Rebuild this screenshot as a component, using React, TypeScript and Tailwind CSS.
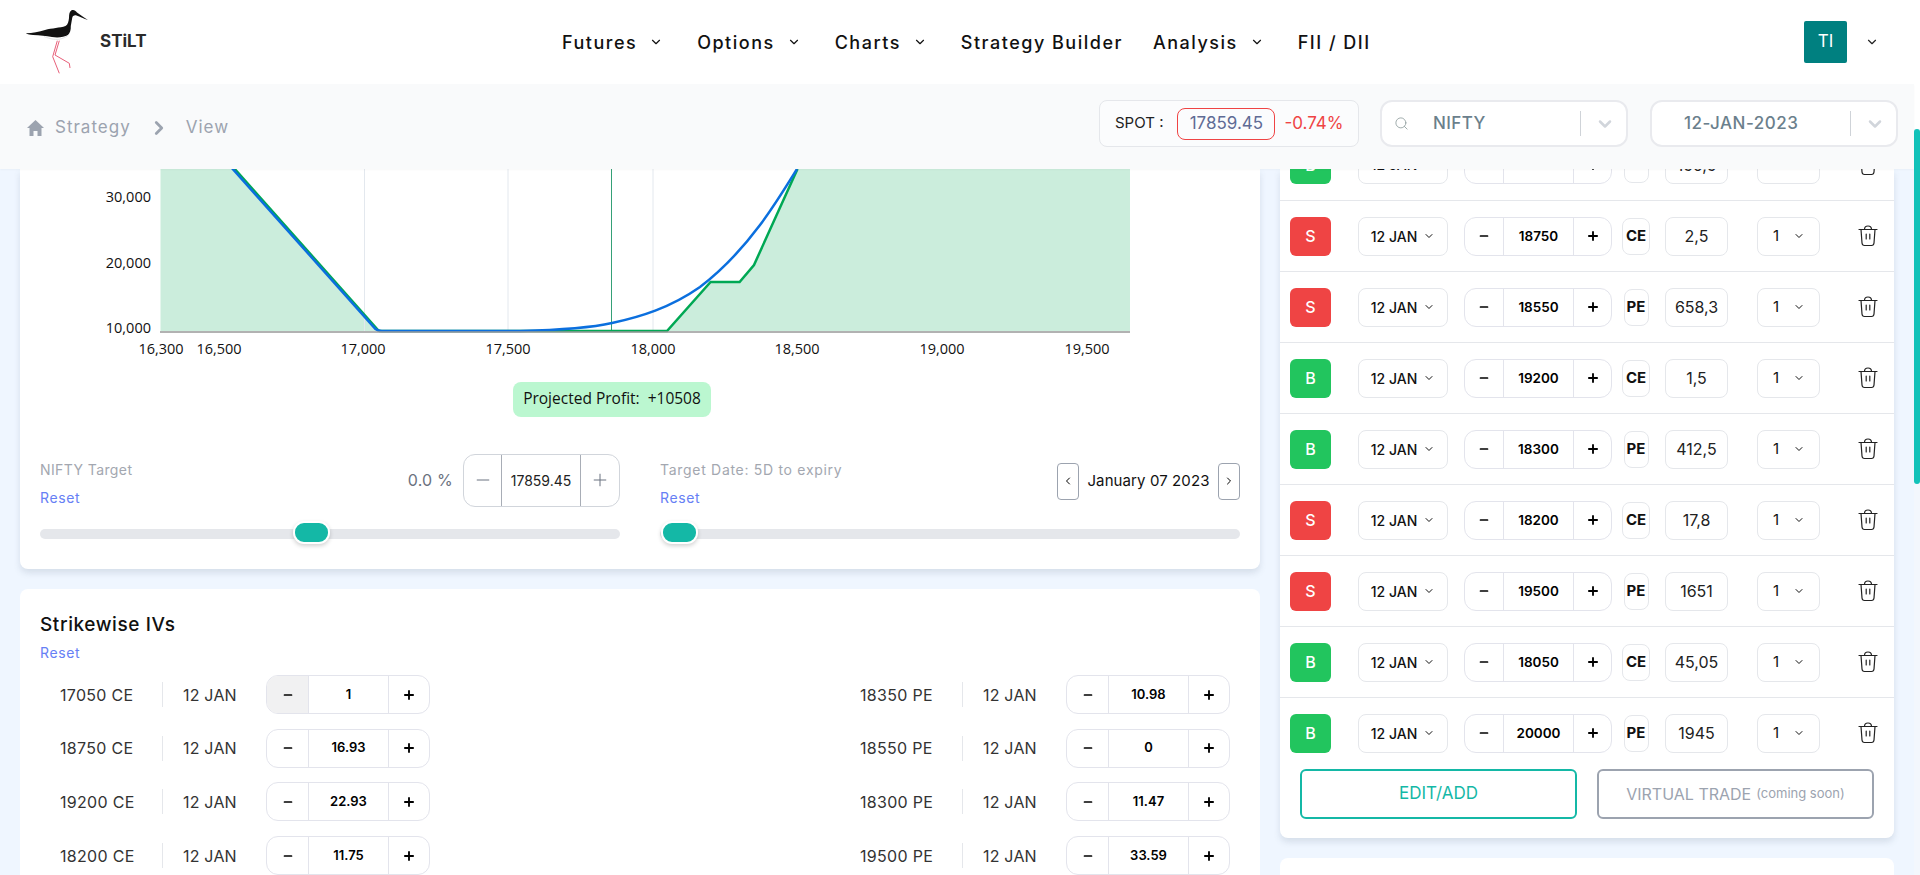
import React from "react";
import { ChevronDown, ChevronLeft, ChevronRight, Search, Minus, Plus } from "lucide-react";

const FONT = "[font-family:Inter,'Noto_Sans',sans-serif]";

function Bird() {
  return (
    <svg width="64" height="68" viewBox="25 8 64 68" className="shrink-0">
      <path d="M25.7 33.3 C33 33 39 32 45 30 C52 28 60 28 65.5 26 C68 24.8 68.6 21.5 69 18 C69 14 69.5 11.5 71.5 10.3 C73.5 9.4 75.5 10.3 77 12.4 C80 14.4 84.5 18 88 20 C84 18.6 80 16.6 76.5 15.4 C74 15 72.6 15.8 72.2 18 C71.8 20.5 71.2 23.5 70.8 26 C71 30 70 33 68 35 C64 37.2 58 38 52 37 C46 36 40 35.2 33 35 C30 35 28 34.5 25.7 33.3 Z" fill="#111" />
      <path d="M44 36.5 C50 39 57 40.5 62 38.5 C65 37.5 67 36.5 68.5 35" fill="none" stroke="#e2e4e7" strokeWidth="1" />
      <path d="M57.3 40.7 L52.7 56.7 L59.3 73.3 M59.3 40.7 L55 55 L69.3 63.3 L70 68" fill="none" stroke="#e8607a" strokeWidth="1" />
    </svg>
  );
}

function NavItem({ label, chevron = true }: { label: string; chevron?: boolean }) {
  return (
    <div className={`flex items-center text-[18px] font-medium tracking-[1.5px] text-[#111] ${chevron ? "pr-[4px]" : ""}`}>
      <span>{label}</span>
      {chevron && <ChevronDown size={14} strokeWidth={2} className="ml-[12px]" />}
    </div>
  );
}

function Header() {
  return (
    <header className="h-[84px] shrink-0 bg-white flex items-center relative">
      <div className="w-[562px] shrink-0 flex items-center pl-[25px]">
        <Bird />
        <span className="ml-[11px] text-[17px] font-bold text-[#2b2b2b]">STiLT</span>
      </div>
      <div className="flex items-center gap-[30px]">
        <NavItem label="Futures" />
        <NavItem label="Options" />
        <NavItem label="Charts" />
        <NavItem label="Strategy Builder" chevron={false} />
        <NavItem label="Analysis" />
        <NavItem label="FII / DII" chevron={false} />
      </div>
      <div className="ml-auto mr-[35px] flex items-center">
        <div className="w-[43px] h-[42px] rounded-[2px] bg-[#008080] text-white flex items-center justify-center text-[17px]">TI</div>
        <ChevronDown size={14} strokeWidth={2} className="ml-[18px] text-[#222]" />
      </div>
    </header>
  );
}

function SubHeader() {
  return (
    <div className="h-[85px] shrink-0 bg-[#f9fafb] flex items-center relative z-10 shadow-[0_1px_2px_rgba(0,0,0,0.03)]">
      <div className="flex items-center pl-[27px] text-[17px] tracking-[1px] text-[#9ca3af] mt-[3px]">
        <svg width="17" height="16" viewBox="0 0 17 16" className="shrink-0">
          <path d="M8.5 0 L17 8 H14.5 V16 H10.5 V11 H6.5 V16 H2.5 V8 H0 Z" fill="#9ca3af" />
        </svg>
        <span className="ml-[11px]">Strategy</span>
        <ChevronRight size={22} strokeWidth={3} className="ml-[17px] mr-[16px]" />
        <span>View</span>
      </div>
      <div className="ml-auto flex items-center mr-[16px] -mt-[6px]">
        <div className="w-[260px] h-[47px] rounded-lg border border-[#e5e7eb] bg-[#fbfcfd] flex items-center pl-[15px] text-[15px] text-[#222]">
          <span>SPOT :</span>
          <span className="ml-[14px] w-[98px] h-[32px] rounded-lg border border-[#ef4444] flex items-center justify-center text-[17px] text-[#5f6b95]">17859.45</span>
          <span className="ml-[9px] text-[17px] text-[#ef4444]">-0.74%</span>
        </div>
        <div className="ml-[21px] w-[248px] h-[47px] rounded-xl border-2 border-[#e9eaee] bg-white flex items-center pl-[12px] pr-[11px] text-[17px] tracking-[0.4px] font-medium text-[#6b7f8c]">
          <Search size={15} strokeWidth={1.3} className="text-[#8b9a9a]" />
          <span className="ml-[24px]">NIFTY</span>
          <span className="ml-auto w-px h-[25px] bg-[#cfd3d8]" />
          <ChevronDown size={20} strokeWidth={3} className="ml-[14px] text-[#d1d5db]" />
        </div>
        <div className="ml-[22px] w-[248px] h-[47px] rounded-xl border-2 border-[#e9eaee] bg-white flex items-center pl-[32px] pr-[11px] text-[17px] tracking-[0.5px] font-medium text-[#6b7f8c]">
          <span>12-JAN-2023</span>
          <span className="ml-auto w-px h-[25px] bg-[#cfd3d8]" />
          <ChevronDown size={20} strokeWidth={3} className="ml-[14px] text-[#d1d5db]" />
        </div>
      </div>
    </div>
  );
}

function Chart() {
  const label = { fontFamily: "'Open Sans','Noto Sans',sans-serif", fontSize: 14.5, fill: "#111" } as const;
  const xs: [string, number][] = [["16,300", 161], ["16,500", 219], ["17,000", 363], ["17,500", 508], ["18,000", 653], ["18,500", 797], ["19,000", 942], ["19,500", 1087]];
  const ys: [string, number][] = [["30,000", 197], ["20,000", 263], ["10,000", 328]];
  return (
    <svg viewBox="20 169 1240 190" width="1240" height="190" className="block shrink-0">
      <polygon points="160.5,169 232,169 378,331 160.5,331" fill="#cbeddc" />
      <polygon points="667,331 710.6,282 739.6,282 754,265 797,169 1130,169 1130,331" fill="#cbeddc" />
      {[364.5, 508, 653].map((x) => (
        <line key={x} x1={x} x2={x} y1={169} y2={331} stroke="#e3e8ee" strokeWidth="1" />
      ))}
      <line x1="611.5" x2="611.5" y1="169" y2="331" stroke="#35a077" strokeWidth="1" />
      <path d="M233 167 L378 330 L379.5 331 L667 331 L710.6 282 L739.6 282 L754 265 L797.5 169" fill="none" stroke="#00a854" strokeWidth="2.5" />
      <path d="M231 167 L375.5 329 Q378 331 382 331 L520 331 C560 330 590 328 612 323 C640 317 670 308 700 287 C725 268 745 245 760 225 C775 205 787 185 797 169" fill="none" stroke="#0b6fde" strokeWidth="2.5" />
      <line x1="160" x2="1130" y1="332" y2="332" stroke="#999" strokeWidth="1.5" />
      {ys.map(([t, y]) => (
        <text key={t} x="151" y={y + 5} textAnchor="end" style={label}>{t}</text>
      ))}
      {xs.map(([t, x]) => (
        <text key={t} x={x} y="354" textAnchor="middle" style={label}>{t}</text>
      ))}
    </svg>
  );
}

function SliderTrack({ left }: { left: number }) {
  return (
    <div className="relative h-[10px] rounded-full bg-[#e5e7eb] mt-[22px]">
      <div className="absolute top-[-7.5px] w-[37px] h-[23px] rounded-[11px] bg-[#14b8a6] border-2 border-white shadow-[0_2px_4px_rgba(0,0,0,0.18)]" style={{ left }} />
    </div>
  );
}

function TargetCard() {
  return (
    <section className="h-[400px] shrink-0 bg-white rounded-b-lg shadow-[0_4px_6px_rgba(100,116,139,0.18)] flex flex-col">
      <Chart />
      <div className="flex justify-center mt-[22.5px] pr-[56px]">
        <div className="w-[198px] h-[35px] rounded-lg bg-[#bbf7d0] flex items-center justify-center text-[15.5px] text-[#111] [font-family:'Open_Sans',sans-serif]">
          Projected Profit:&nbsp; +10508
        </div>
      </div>
      <div className="flex gap-[40px] px-[20px] mt-[37px]">
        <div className="w-[580px] shrink-0">
          <div className="flex h-[53px] items-start">
            <div className="flex flex-col">
              <span className="text-[14px] leading-[20px] mt-[6px] tracking-[0.4px] text-[#a3a7b0]">NIFTY Target</span>
              <span className="text-[14px] leading-[20px] mt-[8px] tracking-[0.6px] text-[#6680f5]">Reset</span>
            </div>
            <span className="ml-auto self-center text-[16px] tracking-[0.2px] text-[#6b7280] mr-[10px]">0.0 %</span>
            <div className="w-[157px] h-[53px] rounded-xl border border-[#d1d5db] flex items-stretch">
              <div className="w-[38px] flex items-center justify-center border-r border-[#a8adb6] text-[#6b7280]"><Minus size={20} strokeWidth={1.2} /></div>
              <div className="flex-1 flex items-center justify-center text-[14px] text-[#222]">17859.45</div>
              <div className="w-[39px] flex items-center justify-center border-l border-[#a8adb6] text-[#6b7280]"><Plus size={20} strokeWidth={1.2} /></div>
            </div>
          </div>
          <SliderTrack left={253} />
        </div>
        <div className="w-[580px] shrink-0">
          <div className="flex h-[53px] items-start">
            <div className="flex flex-col">
              <span className="text-[14px] leading-[20px] mt-[6px] tracking-[0.7px] text-[#a3a7b0]">Target Date: 5D to expiry</span>
              <span className="text-[14px] leading-[20px] mt-[8px] tracking-[0.6px] text-[#6680f5]">Reset</span>
            </div>
            <div className="ml-auto flex items-center mt-[9px]">
              <div className="w-[22px] h-[37px] rounded-[4px] border border-[#9ca3af] flex items-center justify-center"><ChevronLeft size={12} strokeWidth={2} /></div>
              <span className="w-[139px] text-center text-[15px] tracking-[0.1px] text-[#111]">January 07 2023</span>
              <div className="w-[22px] h-[37px] rounded-[4px] border border-[#9ca3af] flex items-center justify-center"><ChevronRight size={12} strokeWidth={2} /></div>
            </div>
          </div>
          <SliderTrack left={1} />
        </div>
      </div>
    </section>
  );
}

function IvGroup({ name, value, muted }: { name: string; value: string; muted?: boolean }) {
  return (
    <div className="w-[370px] flex items-center text-[16px] text-[#333]">
      <span className="w-[102px] shrink-0 tracking-[0.3px]">{name}</span>
      <span className="w-px h-[25px] bg-[#e5e7eb]" />
      <span className="ml-[20px] w-[83px] shrink-0 tracking-[0.2px]">12 JAN</span>
      <div className="w-[164px] h-[39px] rounded-xl border border-[#e3e4ec] flex items-stretch overflow-hidden text-black">
        <div className={`w-[42px] flex items-center justify-center border-r border-[#e3e4ec] ${muted ? "bg-[#f1f1f2]" : ""}`}><Minus size={12} strokeWidth={3.4} /></div>
        <div className="flex-1 flex items-center justify-center text-[13px] font-semibold">{value}</div>
        <div className="w-[41px] flex items-center justify-center border-l border-[#e3e4ec]"><Plus size={14} strokeWidth={3.2} /></div>
      </div>
    </div>
  );
}

const ivs: [string, string, string, string][] = [
  ["17050 CE", "1", "18350 PE", "10.98"],
  ["18750 CE", "16.93", "18550 PE", "0"],
  ["19200 CE", "22.93", "18300 PE", "11.47"],
  ["18200 CE", "11.75", "19500 PE", "33.59"],
];

function IvCard() {
  return (
    <section className="mt-[20px] flex-1 min-h-0 bg-white rounded-t-lg overflow-hidden pl-[20px] pr-[30px] pt-[24px]">
      <h2 className="text-[19px] leading-[24px] font-medium tracking-[0.6px] text-[#111]">Strikewise IVs</h2>
      <div className="text-[14px] leading-[20px] mt-[6px] tracking-[0.6px] text-[#6680f5]">Reset</div>
      <div className="flex flex-col gap-[14.7px] pl-[20px] mt-[12px]">
        {ivs.map(([a, b, c, d], i) => (
          <div key={a} className="flex justify-between">
            <IvGroup name={a} value={b} muted={i === 0} />
            <IvGroup name={c} value={d} />
          </div>
        ))}
      </div>
    </section>
  );
}

function TrashIcon() {
  return (
    <svg width="20" height="22" viewBox="0 0 20 22" fill="none" stroke="#222" strokeWidth="1.2" strokeLinecap="round" className="shrink-0">
      <path d="M1 4.5 H19" />
      <path d="M6.5 4.5 C6.5 2 7.5 1 10 1 C12.5 1 13.5 2 13.5 4.5" />
      <path d="M3 4.5 L4 18 Q4.2 20.5 6.5 20.5 H13.5 Q15.8 20.5 16 18 L17 4.5" />
      <path d="M8.2 9 V14 M11.8 9 V14" />
    </svg>
  );
}

type Leg = [string, string, string, string];
const legs: Leg[] = [
  ["B", "18350", "PE", "156,5"],
  ["S", "18750", "CE", "2,5"],
  ["S", "18550", "PE", "658,3"],
  ["B", "19200", "CE", "1,5"],
  ["B", "18300", "PE", "412,5"],
  ["S", "18200", "CE", "17,8"],
  ["S", "19500", "PE", "1651"],
  ["B", "18050", "CE", "45,05"],
  ["B", "20000", "PE", "1945"],
];

function LegRow({ leg, first }: { leg: Leg; first?: boolean }) {
  const [side, strike, type, price] = leg;
  return (
    <div className={`h-[71px] shrink-0 flex items-center pl-[10px] border-[#e5e7eb] ${first ? "" : "border-t"}`}>
      <div className={`w-[41px] h-[39px] rounded-md flex items-center justify-center text-white text-[16px] font-medium ${side === "B" ? "bg-[#22c55e]" : "bg-[#ef4444]"}`}>{side}</div>
      <div className="ml-[27px] w-[90px] h-[39px] rounded-lg border border-[#e5e7eb] flex items-center justify-center text-[14px] font-medium text-[#111]">
        12 JAN
        <ChevronDown size={12} strokeWidth={2} className="ml-[6px]" />
      </div>
      <div className="ml-[16px] w-[148px] h-[39px] rounded-xl border border-[#e3e4ec] flex items-stretch text-black">
        <div className="w-[39px] flex items-center justify-center border-r border-[#e3e4ec]"><Minus size={12} strokeWidth={3.4} /></div>
        <div className="flex-1 flex items-center justify-center text-[13.5px] font-semibold">{strike}</div>
        <div className="w-[38px] flex items-center justify-center border-l border-[#e3e4ec]"><Plus size={14} strokeWidth={3.2} /></div>
      </div>
      <div className="ml-[10px] w-[28px] flex justify-center">
        <div className={`h-[37px] rounded-lg border border-[#e5e7eb] flex items-center justify-center text-[15px] font-bold text-[#111] ${type === "CE" ? "w-[28px]" : "w-[25px]"}`}>{type}</div>
      </div>
      <div className="ml-[15px] w-[63px] h-[39px] rounded-lg border border-[#e5e7eb] flex items-center justify-center text-[16px] text-[#222]">{price}</div>
      <div className="ml-[29px] w-[63px] h-[39px] rounded-lg border border-[#e5e7eb] flex items-center text-[15px] text-[#111] pl-[15px]">
        1
        <ChevronDown size={12} strokeWidth={2} className="ml-[14px]" />
      </div>
      <div className="ml-[38px]"><TrashIcon /></div>
    </div>
  );
}

function LegsCard() {
  return (
    <section className="h-[669px] shrink-0 bg-white rounded-b-lg shadow-[0_4px_6px_rgba(100,116,139,0.18)] overflow-hidden">
      <div className="-mt-[40px]">
        {legs.map((l, i) => (
          <LegRow key={l[1]} leg={l} first={i === 0} />
        ))}
      </div>
      <div className="flex gap-[20px] px-[20px] mt-[1px]">
        <div className="w-[277px] h-[50px] rounded-md border-2 border-[#14b8a6] flex items-center justify-center text-[17px] text-[#14b8a6]">EDIT/ADD</div>
        <div className="w-[277px] h-[50px] rounded-md border-2 border-[#9ca3af] flex items-center justify-center text-[16px] text-[#9ca3af]">
          VIRTUAL TRADE<span className="ml-[5px] text-[13px]">(coming soon)</span>
        </div>
      </div>
    </section>
  );
}

export default function App() {
  return (
    <div className={`h-[875px] w-[1920px] overflow-hidden flex bg-[#eff6ff] ${FONT}`}>
      <div className="w-[1914px] shrink-0 flex flex-col">
        <Header />
        <SubHeader />
        <main className="flex-1 min-h-0 flex gap-[20px] pl-[20px]">
          <div className="w-[1240px] shrink-0 flex flex-col">
            <TargetCard />
            <IvCard />
          </div>
          <div className="w-[614px] shrink-0 flex flex-col">
            <LegsCard />
            <div className="mt-[20px] flex-1 bg-white rounded-t-lg" />
          </div>
        </main>
      </div>
      <div className="w-[6px] shrink-0 bg-[#f3f7fd] flex flex-col">
        <div className="h-[129px] shrink-0 bg-white" />
        <div className="h-[355px] w-full bg-[#12c2b9] rounded-[3px]" />
      </div>
    </div>
  );
}
